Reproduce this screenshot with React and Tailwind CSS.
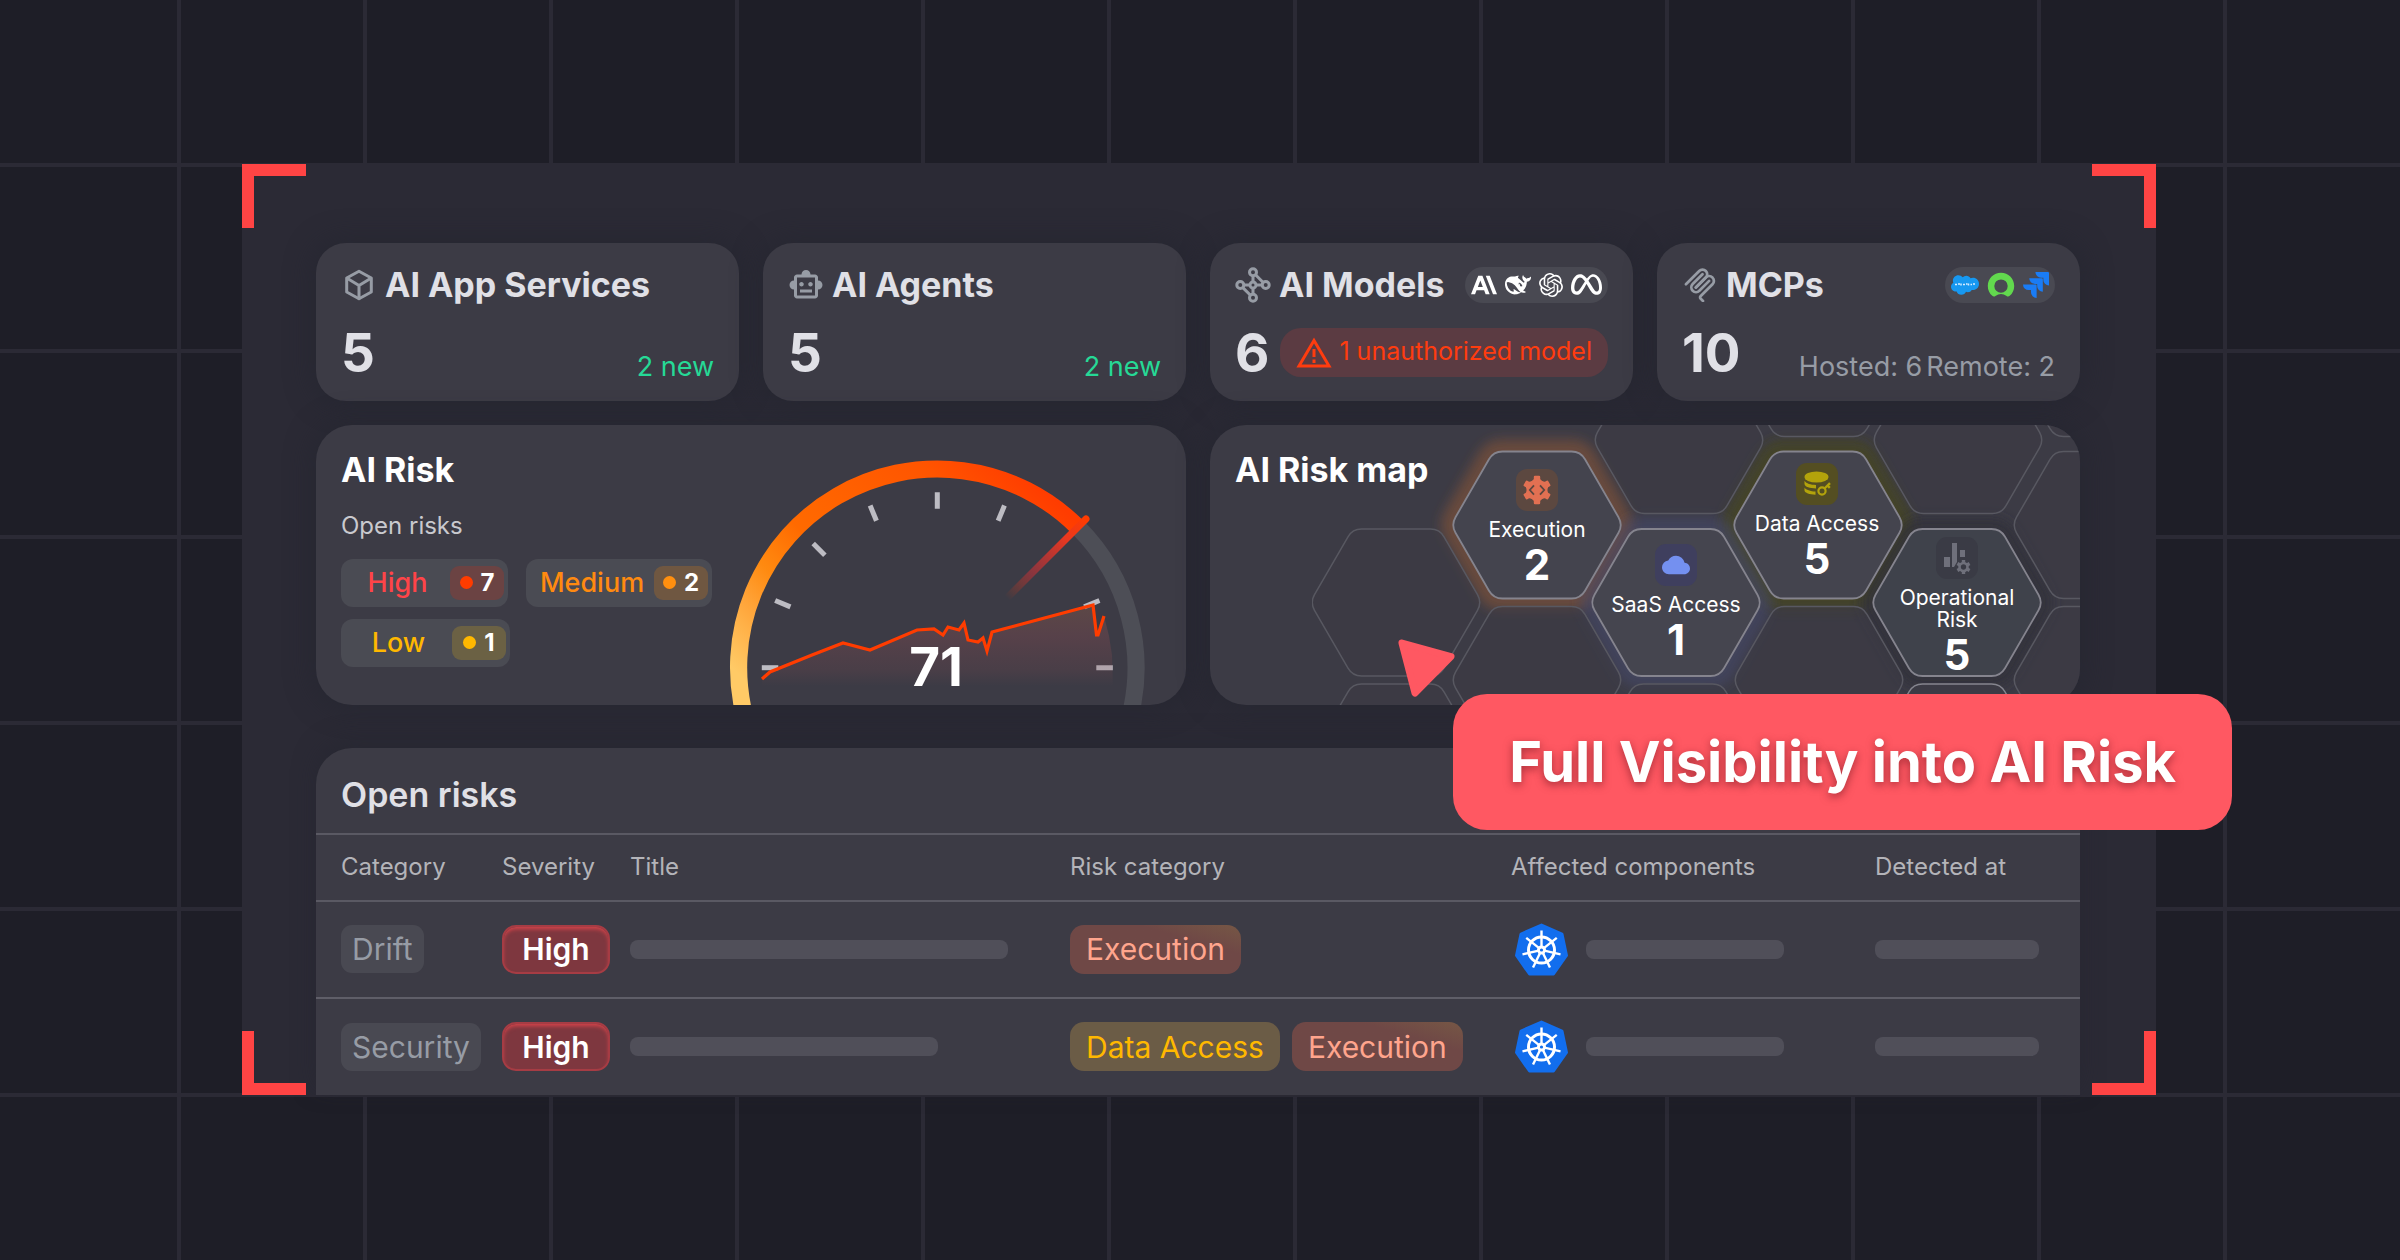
import { SiAnthropic, SiOpenai, SiMeta, SiSalesforce, SiJira } from 'react-icons/si';
import { MdOutlineSmartToy, MdCloud } from 'react-icons/md';

/* ---------- icons ---------- */

function CubeIcon() {
  return (
    <svg viewBox="0 0 32 32" className="size-8" fill="none" stroke="currentColor" strokeWidth="3" strokeLinejoin="round" strokeLinecap="round">
      <path d="M16 2.300 28.300 9v14L16 29.700 3.700 23V9z" />
      <path d="M4.500 9.500l11.500 7 11.500-7M16 16.500v13" />
    </svg>
  );
}

function NetworkIcon() {
  return (
    <svg viewBox="0 0 36 36" className="size-[36px]" fill="none" stroke="currentColor" strokeWidth="3">
      <path d="M18 9v5.500M18 21.500V27M8.500 18h5.500M21.800 18h5.500" />
      <circle cx="18" cy="5.300" r="3.500" />
      <circle cx="18" cy="30.700" r="3.500" />
      <circle cx="5.300" cy="18" r="3.500" />
      <circle cx="30.700" cy="18" r="3.500" />
      <circle cx="18" cy="18" r="3" />
      <path d="M7.800 20.600l7.700 7.700M20.500 7.800l7.700 7.700" />
    </svg>
  );
}

function McpIcon() {
  return (
    <svg viewBox="8 2 164 174" className="size-[34px]" fill="none" stroke="currentColor" strokeWidth="14" strokeLinecap="round">
      <path d="M18 84.8528L85.8822 16.9706C95.2548 7.59798 110.451 7.59798 119.823 16.9706C129.196 26.3431 129.196 41.5391 119.823 50.9117L68.5581 102.177" />
      <path d="M69.2652 101.47L119.823 50.9117C129.196 41.5391 144.392 41.5391 153.765 50.9117L154.118 51.2652C163.491 60.6378 163.491 75.8338 154.118 85.2063L92.7248 146.6C89.6006 149.724 89.6006 154.789 92.7248 157.913L105.331 170.52" />
      <path d="M102.853 33.9411L52.6482 84.1457C43.2756 93.5183 43.2756 108.714 52.6482 118.087C62.0208 127.459 77.2167 127.459 86.5893 118.087L136.794 67.8822" />
    </svg>
  );
}

function DeepseekIcon() {
  return (
    <svg viewBox="0 0 24 24" className="size-[26px]" fill="currentColor" fillRule="evenodd">
      <path d="M23.748 4.482c-.254-.124-.364.113-.512.234-.051.039-.094.09-.137.136-.372.397-.806.657-1.373.626-.829-.046-1.537.214-2.163.848-.133-.782-.575-1.248-1.247-1.548-.352-.156-.708-.311-.955-.65-.172-.241-.219-.51-.305-.774-.055-.16-.11-.323-.293-.35-.2-.031-.278.136-.356.276-.313.572-.434 1.202-.422 1.84.027 1.436.633 2.58 1.838 3.393.137.093.172.187.129.323-.082.28-.18.552-.266.833-.055.179-.137.217-.329.14a5.526 5.526 0 01-1.736-1.18c-.857-.828-1.631-1.742-2.597-2.458a11.365 11.365 0 00-.689-.471c-.985-.957.13-1.743.388-1.836.27-.098.093-.432-.779-.428-.872.004-1.67.295-2.687.684a3.055 3.055 0 01-.465.137 9.597 9.597 0 00-2.883-.102c-1.885.21-3.39 1.102-4.497 2.623C.082 8.606-.231 10.684.152 12.85c.403 2.284 1.569 4.175 3.36 5.653 1.858 1.533 3.997 2.284 6.438 2.14 1.482-.085 3.133-.284 4.994-1.86.47.234.962.327 1.78.397.63.059 1.236-.03 1.705-.128.735-.156.684-.837.419-.961-2.155-1.004-1.682-.595-2.113-.926 1.096-1.296 2.746-2.642 3.392-7.003.05-.347.007-.565 0-.845-.004-.17.035-.237.23-.256a4.173 4.173 0 001.545-.475c1.396-.763 1.96-2.015 2.093-3.517.02-.23-.004-.467-.247-.588zM11.581 18c-2.089-1.642-3.102-2.183-3.52-2.16-.392.024-.321.471-.235.763.09.288.207.486.371.739.114.167.192.416-.113.603-.673.416-1.842-.14-1.897-.167-1.361-.802-2.5-1.86-3.301-3.307-.774-1.393-1.224-2.887-1.298-4.482-.02-.386.093-.522.477-.592a4.696 4.696 0 011.529-.039c2.132.312 3.946 1.265 5.468 2.774.868.86 1.525 1.887 2.202 2.891.72 1.066 1.494 2.082 2.48 2.914.348.292.625.514.891.677-.802.09-2.14.11-3.054-.614zm1-6.44a.306.306 0 01.415-.287.302.302 0 01.2.288.306.306 0 01-.31.307.303.303 0 01-.304-.308zm3.11 1.596c-.2.081-.399.151-.59.16a1.245 1.245 0 01-.798-.254c-.274-.23-.47-.358-.552-.758a1.73 1.73 0 01.016-.588c.07-.327-.008-.537-.239-.727-.187-.156-.426-.199-.688-.199a.559.559 0 01-.254-.078c-.11-.054-.2-.19-.114-.358.028-.054.16-.186.192-.21.356-.202.767-.136 1.146.016.352.144.618.408 1.001.782.391.451.462.576.685.914.176.265.336.537.445.848.067.195-.019.354-.25.452z" />
    </svg>
  );
}

function SalesforceIcon() {
  return (
    <span className="relative flex">
      <SiSalesforce className="size-7 text-[#1798f0]" />
      <svg viewBox="0 0 28 28" className="absolute inset-0 size-7" aria-hidden="true">
        <path d="M4 13.500h2M7 13h2M10 12.500v2M12 13.500h2M15 13h1.500M17.500 12.500v2M19.500 13.500h1.500M22 13h2" stroke="#d6ecff" strokeWidth="1.500" />
      </svg>
    </span>
  );
}

function ServicenowIcon() {
  return (
    <svg viewBox="0 0 28 26" className="h-[26px] w-7">
      <path fill="#62d84e" fillRule="evenodd" d="M14 .8C6.700.8.800 6.600.800 13.900c0 4 1.700 7.500 4.500 9.900.9.800 2.200.8 3.100.1a9.600 9.600 0 0 1 11.200 0c.9.700 2.200.7 3.100-.1 2.800-2.400 4.500-5.900 4.500-9.900C27.200 6.600 21.300.8 14 .8zm0 6.600a6.700 6.700 0 1 1 0 13.400 6.700 6.700 0 0 1 0-13.400z" />
    </svg>
  );
}

function WarningIcon() {
  return (
    <svg viewBox="0 0 36 31" className="h-[31px] w-9 shrink-0" fill="none" stroke="currentColor" strokeWidth="3">
      <path d="M18 3.500 33 29H3z" />
      <path d="M18 12v8M18 22.500v3.500" />
    </svg>
  );
}

const TEETH = [0, 60, 120, 180, 240, 300];

function GearCodeIcon() {
  return (
    <svg viewBox="-15 -15 30 30" className="size-[30px]">
      <circle r="10.500" fill="#e27052" />
      {TEETH.map((a) => (
        <path key={a} transform={`rotate(${a})`} d="M-5.500-8-3.200-11v-2q0-1.200 1.200-1.200h4q1.200 0 1.200 1.200v2l2.300 3z" fill="#e27052" />
      ))}
      <path d="M-3-4.700-7.200 0-3 4.700M3-4.700 7.200 0 3 4.700" fill="none" stroke="#5c4840" strokeWidth="1.800" />
    </svg>
  );
}

function DatabaseKeyIcon() {
  return (
    <svg viewBox="0 0 27 26" className="h-[26px] w-[27px]" fill="#b3a30b">
      <ellipse cx="12.500" cy="6" rx="12" ry="5.600" />
      <path d="M.5 9.800c2 3 6 4 11.500 4.200v3.400C6 17.300.9 16 .5 13zM.5 16.500c1.500 2.500 6 3.800 11 4.100v3.200C5.500 23.400.9 22 .5 19.500z" />
      <circle cx="18" cy="20" r="3.600" fill="none" stroke="#b3a30b" strokeWidth="2.200" />
      <path d="M20.500 17.500 26 12.200M23.500 14.500l2.300 2.300" stroke="#b3a30b" strokeWidth="2.400" fill="none" />
    </svg>
  );
}

function ChartGearIcon() {
  return (
    <svg viewBox="0 0 28 32" className="h-8 w-7" fill="#6f707b">
      <path d="M1 15h6v10H1zM9 1h5v19l-3 5H9zM17 8h5v7h-5z" />
      <g transform="translate(20.500 25)">
        {TEETH.map((a) => (
          <path key={a} transform={`rotate(${a})`} d="M-1.700-4.500h3.400v-2.500h-3.400z" />
        ))}
        <circle r="4" fill="none" stroke="#6f707b" strokeWidth="2.600" />
      </g>
    </svg>
  );
}

const SPOKES = [0, 1, 2, 3, 4, 5, 6].map((i) => (i * 360) / 7);

function KubernetesIcon() {
  return (
    <svg viewBox="-26.500 -27 53 53" className="size-[53px] shrink-0" role="img" aria-label="Kubernetes">
      <path d="M0-25 20.500-16 25 5.500 12 24h-24L-25 5.500-20.500-16z" fill="#126eee" stroke="#126eee" strokeWidth="3" strokeLinejoin="round" />
      <circle r="13" fill="none" stroke="#fff" strokeWidth="3" />
      {SPOKES.map((a) => (
        <path key={a} transform={`rotate(${a})`} d="M0-3V-19.500" stroke="#fff" strokeWidth="2.400" />
      ))}
      <circle r="4.500" fill="#fff" />
      <circle r="1.600" fill="#126eee" />
    </svg>
  );
}

/* ---------- summary cards ---------- */

function StatCard({ icon, title, value, badge, children }) {
  return (
    <section className="rounded-[30px] bg-[#3c3b45] px-[25px] pt-[21px] pb-[18px] shadow-[0_0_24px_6px_rgba(36,38,48,0.6)]">
      <header className="flex h-[42px] items-center justify-between">
        <div className="flex items-center gap-2">
          <span className="flex w-9 justify-center text-[#979ca5]">{icon}</span>
          <h2 className="text-[34px] leading-[42px] font-bold whitespace-nowrap text-[#e0e0e6]">{title}</h2>
        </div>
        {badge && <div className="flex h-9 items-center gap-2 rounded-full bg-[#494952] px-1.5 text-white">{badge}</div>}
      </header>
      <div className="mt-[18px] flex items-end justify-between">
        <span className="text-[53px] leading-[59px] font-bold text-[#e0e0e6]">{value}</span>
        {children}
      </div>
    </section>
  );
}

/* ---------- AI Risk gauge ---------- */

const TICKS = [-90, -67.5, -45, -22.5, 0, 22.5, 67.5, 90];
const TREND =
  '762,679 770,672 812,655 843,643 870,650 917,630 934,629 943,635 948,627 959,630 964,623 968,640 978,642 983,638 987,651 992,632 1093,605';
const TREND_TAIL = '1096.500,635 1098,635 1104,616';

function Gauge() {
  return (
    <svg viewBox="720 425 466 280" className="h-[280px] w-[466px] shrink-0" role="img" aria-label="Risk score 71">
      <defs>
        <linearGradient id="arc" gradientUnits="userSpaceOnUse" x1="740" y1="675" x2="985" y2="430">
          <stop offset="0" stopColor="#ffca66" />
          <stop offset="0.16" stopColor="#ffa53a" />
          <stop offset="0.27" stopColor="#ff8a10" />
          <stop offset="0.42" stopColor="#ff6a00" />
          <stop offset="0.8" stopColor="#ff5500" />
          <stop offset="1" stopColor="#ff3c00" />
        </linearGradient>
        <linearGradient id="needle" gradientUnits="userSpaceOnUse" x1="1007" y1="598" x2="1086" y2="519">
          <stop offset="0" stopColor="#ff3c00" stopOpacity="0" />
          <stop offset="0.3" stopColor="#d03038" stopOpacity="0.5" />
          <stop offset="0.75" stopColor="#e83820" />
          <stop offset="1" stopColor="#ff3c00" />
        </linearGradient>
        <linearGradient id="area" gradientUnits="userSpaceOnUse" x1="0" y1="605" x2="0" y2="686">
          <stop offset="0" stopColor="#8a5a48" stopOpacity="0.42" />
          <stop offset="0.4" stopColor="#8a4c52" stopOpacity="0.34" />
          <stop offset="0.8" stopColor="#804a50" stopOpacity="0.2" />
          <stop offset="1" stopColor="#804a50" stopOpacity="0" />
        </linearGradient>
      </defs>
      <g fill="none" strokeWidth="17.200">
        <path d="M1077.800 527.200A198.700 198.700 0 0 1 1129 720" stroke="#4d4e56" />
        <path d="M745.600 720A198.700 198.700 0 0 1 1077.800 527.200" stroke="url(#arc)" />
      </g>
      {TICKS.map((a) => (
        <path key={a} transform={`translate(937.300 667.700) rotate(${a})`} d="M0-175.500V-159" stroke="#bdbcc3" strokeWidth="5" />
      ))}
      <path d="M1008 597 1086 519" stroke="url(#needle)" strokeWidth="7" strokeLinecap="round" />
      <polygon points={`${TREND} ${TREND_TAIL} 1109,636 1112,655 1113,686 762,686`} fill="url(#area)" />
      <polyline points={`${TREND} ${TREND_TAIL}`} fill="none" stroke="#ff3c00" strokeWidth="3.200" />
      <text x="936" y="686" textAnchor="middle" className="fill-white text-[53px] font-bold">71</text>
    </svg>
  );
}

function SeverityChip({ label, count, width, text, badge, dot }) {
  return (
    <div className={`flex h-12 items-center rounded-xl bg-[#4a4b53] px-1 ${width}`}>
      <span className={`flex-1 text-center text-[27px] leading-8 font-medium ${text}`}>{label}</span>
      <span className={`flex h-[34px] w-[54px] items-center justify-center gap-2 rounded-[9px] text-2xl font-bold text-white ${badge}`}>
        <i className={`size-[13px] rounded-full ${dot}`} />
        {count}
      </span>
    </div>
  );
}

/* ---------- AI Risk map ---------- */

// Flat-topped hexagon with softened corners.
function hexPath(cx, cy) {
  const pts = [[-86, 0], [-43.5, -73.5], [43.5, -73.5], [86, 0], [43.5, 73.5], [-43.5, 73.5]];
  const d = 9;
  return (
    pts
      .map((p, i) => {
        const toward = (q) => {
          const l = Math.hypot(q[0] - p[0], q[1] - p[1]);
          return `${cx + p[0] + ((q[0] - p[0]) * d) / l} ${cy + p[1] + ((q[1] - p[1]) * d) / l}`;
        };
        const prev = toward(pts[(i + 5) % 6]);
        const next = toward(pts[(i + 1) % 6]);
        return `${i ? 'L' : 'M'}${prev}Q${cx + p[0]} ${cy + p[1]} ${next}`;
      })
      .join('') + 'Z'
  );
}

const EMPTY_CELLS = [
  [84, 177.5], [84, 332.5], [225, 255], [367, 15], [507, -62], [646, 15],
  [786, -62], [786, 100], [786, 255], [507, 255], [366, 332.5],
];

const ACTIVE_CELLS = [
  { x: 506, y: 100, glow: '#47461a', fill: '#44444e', opacity: 0.7 },
  { x: 225, y: 100, glow: '#8c5636', fill: '#44444e', opacity: 0.55 },
  { x: 364, y: 177.5, glow: '#484a70', fill: '#45454f', opacity: 0.5 },
  { x: 645, y: 177.5, glow: '#2c2c38', fill: '#3f424b', opacity: 0.7 },
];

function RiskNode({ place, icon, tile, label, value }) {
  return (
    <div className={`absolute flex w-[140px] flex-col items-center text-center text-white ${place}`}>
      <span className={`flex size-[42px] items-center justify-center rounded-[11px] ${tile}`}>{icon}</span>
      <span className="mt-2 text-[21px] leading-[22px]">{label}</span>
      <span className="mt-1 text-[42px] leading-10 font-bold">{value}</span>
    </div>
  );
}

function RiskMap() {
  return (
    <div className="absolute top-0 right-0 h-[280px] w-[768px]">
      <svg viewBox="0 0 768 280" className="size-full" aria-hidden="true">
        <defs>
          <filter id="soft" x="-30%" y="-30%" width="160%" height="160%">
            <feGaussianBlur stdDeviation="6" />
          </filter>
        </defs>
        {ACTIVE_CELLS.map((c) => (
          <path key={c.x} d={hexPath(c.x, c.y)} fill="none" stroke={c.glow} strokeOpacity={c.opacity} strokeWidth="24" filter="url(#soft)" />
        ))}
        {EMPTY_CELLS.map(([x, y]) => (
          <path key={`${x},${y}`} d={hexPath(x, y)} fill="#3c3b45" fillOpacity="0.6" stroke="#585861" strokeWidth="1.500" />
        ))}
        <path d={hexPath(645, 332.500)} fill="#3c3b45" stroke="#85858e" strokeWidth="1.400" />
        {ACTIVE_CELLS.map((c) => (
          <path key={c.x} d={hexPath(c.x, c.y)} fill={c.fill} stroke="#85848e" strokeWidth="1.800" />
        ))}
      </svg>
      <RiskNode place="top-[44px] left-[155px]" tile="bg-[#5c4840]" icon={<GearCodeIcon />} label="Execution" value="2" />
      <RiskNode place="top-[119px] left-[294px]" tile="bg-[#3f3f5e]" icon={<MdCloud className="size-7 text-[#7490f0]" />} label="SaaS Access" value="1" />
      <RiskNode place="top-[38px] left-[435px]" tile="bg-[#544e22]" icon={<DatabaseKeyIcon />} label="Data Access" value="5" />
      <RiskNode place="top-[112px] left-[575px]" tile="bg-[#3a3b45]" icon={<ChartGearIcon />} label={<>Operational<br />Risk</>} value="5" />
    </div>
  );
}

/* ---------- open risks table ---------- */

function Placeholder({ width }) {
  return <span className={`block h-[19px] rounded-lg bg-[#504f59] ${width}`} />;
}

const RISK_TAGS = {
  Execution: 'bg-linear-to-tr from-[#6f4846] from-70% to-[#765745] text-[#ffa58d]',
  'Data Access': 'bg-[#6b5c46] text-[#ffb800]',
};

const ROWS = [
  { category: 'Drift', title: 'w-[378px]', tags: ['Execution'] },
  { category: 'Security', title: 'w-[308px]', tags: ['Data Access', 'Execution'] },
];

function OpenRisks() {
  return (
    <section className="mt-[43px] overflow-hidden rounded-t-[36px] bg-[#3c3b45] shadow-[0_-8px_24px_-2px_rgba(36,38,48,0.6)]">
      <h2 className="px-[25px] pt-[26px] pb-[17px] text-[34px] leading-[42px] font-semibold text-[#e0e0e6]">Open risks</h2>
      <table className="w-full table-fixed border-collapse text-left">
        <colgroup>
          <col className="w-[186px]" />
          <col className="w-[128px]" />
          <col className="w-[440px]" />
          <col className="w-[441px]" />
          <col className="w-[364px]" />
          <col />
        </colgroup>
        <thead>
          <tr className="h-[67px] border-y-2 border-[#5a5963] text-2xl text-[#b4b4b9]">
            <th className="pl-[25px] font-normal">Category</th>
            <th className="font-normal">Severity</th>
            <th className="font-normal">Title</th>
            <th className="font-normal">Risk category</th>
            <th className="font-normal">Affected components</th>
            <th className="font-normal">Detected at</th>
          </tr>
        </thead>
        <tbody>
          {ROWS.map((row) => (
            <tr key={row.category} className="h-[97px] border-b-2 border-[#5f5e68] text-3xl last:border-b-0">
              <td className="pl-[25px]">
                <span className="inline-flex h-12 items-center rounded-[11px] bg-[#494952] px-[11px] text-[#979ca5]">{row.category}</span>
              </td>
              <td>
                <span className="flex h-[49px] w-[108px] items-center justify-center rounded-[14px] border-2 border-[#a63c44] bg-[#7e373f] font-semibold text-white shadow-[inset_0_3px_4px_-1px_#d8454b]">
                  High
                </span>
              </td>
              <td><Placeholder width={row.title} /></td>
              <td>
                <div className="flex gap-3">
                  {row.tags.map((t) => (
                    <span key={t} className={`flex h-[49px] items-center rounded-[14px] px-4 whitespace-nowrap ${RISK_TAGS[t]}`}>{t}</span>
                  ))}
                </div>
              </td>
              <td>
                <div className="flex items-center gap-[18px] pl-1">
                  <KubernetesIcon />
                  <Placeholder width="w-[198px]" />
                </div>
              </td>
              <td><Placeholder width="w-[164px]" /></td>
            </tr>
          ))}
        </tbody>
      </table>
    </section>
  );
}

/* ---------- page ---------- */

function Callout() {
  return (
    <div className="absolute top-[530px] -right-[76px]">
      <svg viewBox="0 0 60 60" className="absolute -top-[56px] -left-[57px] size-[60px]" aria-hidden="true">
        <path d="M6 5 55 18.500 19 55z" fill="#ff5862" stroke="#ff5862" strokeWidth="7" strokeLinejoin="round" />
      </svg>
      <p className="flex h-[136px] items-center rounded-[34px] bg-[#ff5862] px-14 text-[56px] font-bold whitespace-nowrap text-white [text-shadow:0_3px_8px_rgba(110,20,30,0.6)]">
        Full Visibility into AI Risk
      </p>
    </div>
  );
}

export default function App() {
  return (
    <main className="flex min-h-screen items-center overflow-hidden bg-[#1e1e27] bg-[linear-gradient(to_right,#2b2a35_4px,transparent_4px),linear-gradient(to_bottom,#2b2a35_4px,transparent_4px)] bg-[size:186px_186px] bg-[position:177px_163px] pr-[244px] pb-0.5 pl-[242px] font-['Inter','Liberation_Sans',sans-serif]">
      <div className="relative w-full bg-[#2b2a35] pt-[79px] pr-[76px] pl-[74px]">
        <i className="absolute top-0 left-0 size-16 border-t-12 border-l-12 border-[#ff4444]" />
        <i className="absolute top-0 right-0 size-16 border-t-12 border-r-12 border-[#ff4444]" />
        <i className="absolute bottom-0 left-0 size-16 border-b-12 border-l-12 border-[#ff4444]" />
        <i className="absolute right-0 bottom-0 size-16 border-r-12 border-b-12 border-[#ff4444]" />

        <div className="grid grid-cols-4 gap-6">
          <StatCard icon={<CubeIcon />} title="AI App Services" value="5">
            <span className="text-[27px] leading-8 text-[#26d996]">2 new</span>
          </StatCard>
          <StatCard icon={<MdOutlineSmartToy className="size-9" />} title="AI Agents" value="5">
            <span className="text-[27px] leading-8 text-[#26d996]">2 new</span>
          </StatCard>
          <StatCard
            icon={<NetworkIcon />}
            title="AI Models"
            value="6"
            badge={<><SiAnthropic className="size-[26px]" /><DeepseekIcon /><SiOpenai className="size-6" /><SiMeta className="size-[31px]" /></>}
          >
            <span className="mb-1.5 flex h-[49px] items-center gap-[7px] rounded-[21px] bg-[#5b3b42] px-4 text-[25px] whitespace-nowrap text-[#ff3c0f]">
              <WarningIcon />
              1 unauthorized model
            </span>
          </StatCard>
          <StatCard
            icon={<McpIcon />}
            title="MCPs"
            value="10"
            badge={<><SalesforceIcon /><ServicenowIcon /><SiJira className="size-[26px] text-[#1a7cf5]" /></>}
          >
            <span className="flex gap-1 text-[27px] leading-8 whitespace-nowrap text-[#979ca5]">
              <span>Hosted: 6</span>
              <span>Remote: 2</span>
            </span>
          </StatCard>
        </div>

        <div className="mt-6 grid grid-cols-2 gap-6">
          <section className="flex justify-between overflow-hidden rounded-[36px] bg-[#3c3b45] pl-[25px] shadow-[0_0_24px_6px_rgba(36,38,48,0.6)]">
            <div className="pt-6">
              <h2 className="text-[34px] leading-[42px] font-bold text-white">AI Risk</h2>
              <p className="mt-[19px] text-2xl leading-8 text-[#c9c9ce]">Open risks</p>
              <div className="mt-[17px] flex w-[371px] flex-wrap gap-x-[18px] gap-y-3">
                <SeverityChip label="High" count="7" width="w-[167px]" text="text-[#ff4448]" badge="bg-[#6b4343]" dot="bg-[#ff3c00]" />
                <SeverityChip label="Medium" count="2" width="w-[186px]" text="text-[#ff8a10]" badge="bg-[#6f5741]" dot="bg-[#ff8f0f]" />
                <SeverityChip label="Low" count="1" width="w-[169px]" text="text-[#ffb800]" badge="bg-[#6b6144]" dot="bg-[#ffb800]" />
              </div>
            </div>
            <Gauge />
          </section>
          <section className="relative overflow-hidden rounded-[36px] bg-[#3c3b45] px-[25px] pt-6 shadow-[0_0_24px_6px_rgba(36,38,48,0.6)]">
            <RiskMap />
            <h2 className="relative text-[34px] leading-[42px] font-bold text-white">AI Risk map</h2>
          </section>
        </div>

        <OpenRisks />
        <Callout />
      </div>
    </main>
  );
}
